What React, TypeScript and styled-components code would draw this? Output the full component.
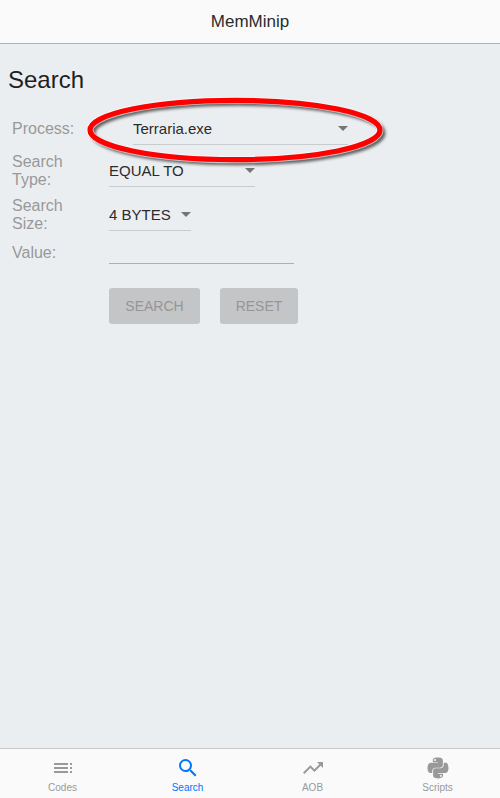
import React from 'react';
import styled, { createGlobalStyle } from 'styled-components';
import { MdSearch, MdToc, MdTrendingUp } from 'react-icons/md';
import { FaPython } from 'react-icons/fa';

const GlobalStyle = createGlobalStyle`
  *, *::before, *::after { box-sizing: border-box; }
  body {
    margin: 0;
    background: #ebeef1;
    font-family: "Liberation Sans", Arial, sans-serif;
    color: #1f1f21;
    overflow: hidden;
  }
`;

const Page = styled.div`
  display: flex;
  flex-direction: column;
  height: 100vh;
  min-height: 798px;
`;

const Toolbar = styled.header`
  height: 44px;
  flex: none;
  display: flex;
  align-items: center;
  justify-content: center;
  background: #fafafa;
  border-bottom: 1px solid #b2b2b2;
  color: #2b2b2d;
  font-size: 17px;
  line-height: 44px;
`;

const Content = styled.main`
  flex: 1;
  padding: 22px 8px 0;
`;

const Heading = styled.h1`
  margin: 0;
  font-size: 24px;
  font-weight: 400;
  line-height: 28px;
`;

const Form = styled.div`
  display: grid;
  grid-template-columns: 97px 1fr;
  grid-template-rows: 39px 44px 44px 27px 72px;
  padding: 18px 0 0 4px;
`;

const Label = styled.label<{ $top: number }>`
  width: 70px;
  padding-top: ${({ $top }) => $top}px;
  font-size: 16px;
  line-height: 18px;
  color: #999;
`;

const Select = styled.button<{ $width: number; $top: number; $indent?: number }>`
  display: flex;
  align-items: center;
  justify-content: space-between;
  width: ${({ $width }) => $width}px;
  height: 32px;
  margin: ${({ $top, $indent = 0 }) => `${$top}px 0 0 ${$indent}px`};
  padding: 0;
  border: 0;
  border-bottom: 1px solid #c9ccce;
  background: none;
  color: #2b2b2d;
  font: 15px/31px "Liberation Sans", Arial, sans-serif;
`;

const Caret = styled.span`
  width: 0;
  height: 0;
  border: 5px solid transparent;
  border-top-color: #757575;
  border-bottom: 0;
`;

const ProcessField = styled.div`
  position: relative;
`;

const Highlight = styled.svg`
  position: absolute;
  left: -29px;
  top: -24px;
  pointer-events: none;
  overflow: visible;
`;

const ValueInput = styled.input`
  width: 185px;
  height: 25px;
  padding: 0;
  border: 0;
  border-bottom: 1px solid #afafaf;
  border-radius: 0;
  background: none;
  outline: 0;
`;

const Actions = styled.div`
  display: flex;
  gap: 20px;
  padding-top: 22px;
`;

const ActionButton = styled.button<{ $width: number }>`
  width: ${({ $width }) => $width}px;
  height: 36px;
  padding: 0;
  border: 0;
  border-radius: 3px;
  background: #c4c5c7;
  color: #959698;
  font: 14px/36px "Liberation Sans", Arial, sans-serif;
`;

const TabBar = styled.nav`
  flex: none;
  height: 50px;
  display: grid;
  grid-template-columns: repeat(4, 1fr);
  background: #fafafa;
  border-top: 1px solid #c5c7c9;
`;

const Tab = styled.button<{ $active?: boolean }>`
  display: flex;
  flex-direction: column;
  align-items: center;
  padding: 7px 0 0;
  border: 0;
  background: none;
  color: ${({ $active }) => ($active ? '#0076ff' : '#999')};
  font: 10px/12px "Liberation Sans", Arial, sans-serif;
  svg { display: block; flex: none; }
`;

const TabLabel = styled.span`
  margin-top: 2px;
`;

const tabs = [
  { label: 'Codes', Icon: MdToc },
  { label: 'Search', Icon: MdSearch, active: true },
  { label: 'AOB', Icon: MdTrendingUp },
  { label: 'Scripts', Icon: FaPython },
];

export default function App() {
  return (
    <>
      <GlobalStyle />
      <Page>
        <Toolbar>MemMinip</Toolbar>
        <Content>
          <Heading>Search</Heading>
          <Form>
            <Label $top={8}>Process:</Label>
            <ProcessField>
              <Select $width={215} $top={1} $indent={24}>
                Terraria.exe
                <Caret />
              </Select>
              <Highlight width="310" height="82" viewBox="80 88 310 82" fill="none">
                <defs>
                  <filter id="ring-shadow" x="-10%" y="-30%" width="120%" height="160%">
                    <feGaussianBlur stdDeviation="1.5" />
                  </filter>
                </defs>
                <ellipse cx="238" cy="133" rx="145" ry="29.7" stroke="#000" strokeOpacity=".6" strokeWidth="5" filter="url(#ring-shadow)" />
                <ellipse cx="235" cy="130" rx="145" ry="29.7" stroke="#fff" strokeOpacity=".6" strokeWidth="7" />
                <ellipse cx="235" cy="130" rx="145" ry="29.7" stroke="#f00" strokeWidth="5.2" />
              </Highlight>
            </ProcessField>
            <Label $top={2}>Search Type:</Label>
            <Select $width={146} $top={4}>
              EQUAL TO
              <Caret />
            </Select>
            <Label $top={2}>Search Size:</Label>
            <Select $width={82} $top={4}>
              4 BYTES
              <Caret />
            </Select>
            <Label $top={5}>Value:</Label>
            <ValueInput aria-label="Value" />
            <span />
            <Actions>
              <ActionButton $width={91}>SEARCH</ActionButton>
              <ActionButton $width={78}>RESET</ActionButton>
            </Actions>
          </Form>
        </Content>
        <TabBar>
          {tabs.map(({ label, Icon, active }) => (
            <Tab key={label} $active={active}>
              <Icon size={24} />
              <TabLabel>{label}</TabLabel>
            </Tab>
          ))}
        </TabBar>
      </Page>
    </>
  );
}
